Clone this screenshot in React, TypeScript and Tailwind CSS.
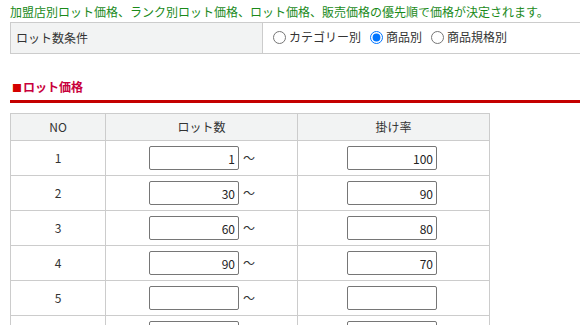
import React from "react";

const rows = [
  { no: "1", lot: "1", rate: "100" },
  { no: "2", lot: "30", rate: "90" },
  { no: "3", lot: "60", rate: "80" },
  { no: "4", lot: "90", rate: "70" },
  { no: "5", lot: "", rate: "" },
  { no: "", lot: "", rate: "" },
];

const font = { fontFamily: '"Noto Sans CJK JP", "Liberation Sans", sans-serif' };

const NumInput = ({ value, extra = "" }: { value: string; extra?: string }) => (
  <input
    type="text"
    defaultValue={value}
    className={`w-[90px] h-[24px] border border-[#767676] rounded-[2px] bg-white text-right pr-[3px] text-[12px] text-[#222] align-middle outline-none ${extra}`}
  />
);

export default function App() {
  return (
    <div
      className="w-[580px] h-[325px] overflow-hidden bg-white text-[12px] text-[#333] pl-[10px]"
      style={font}
    >
      <p className="pt-[3px] leading-[18px] text-[#1a8a1a] whitespace-nowrap">
        加盟店別ロット価格、ランク別ロット価格、ロット価格、販売価格の優先順で価格が決定されます。
      </p>

      <table className="mt-[1px] w-[600px] border-collapse table-fixed">
        <tbody>
          <tr className="h-[31px]">
            <th className="w-[252px] border border-[#cccccc] bg-[#f2f3f3] text-left font-normal px-[5px]">
              ロット数条件
            </th>
            <td className="border border-[#cccccc] px-[5px] whitespace-nowrap">
              <label className="inline-flex items-center">
                <input type="radio" name="cond" className="ml-[5px] mr-[3px] w-[13px] h-[13px]" />
                カテゴリー別
              </label>
              <label className="inline-flex items-center ml-[4px]">
                <input type="radio" name="cond" defaultChecked className="ml-[5px] mr-[3px] w-[13px] h-[13px]" />
                商品別
              </label>
              <label className="inline-flex items-center ml-[4px]">
                <input type="radio" name="cond" className="ml-[5px] mr-[3px] w-[13px] h-[13px]" />
                商品規格別
              </label>
            </td>
          </tr>
        </tbody>
      </table>

      <h2 className="mt-[23px] leading-[20px] pb-[2px] border-b-[3px] border-[#c40000] font-bold text-[12px] text-[#c8003c] pl-[2px]">
        <span className="text-[#d40000] text-[10px] mr-[1px]">■</span>ロット価格
      </h2>

      <table className="mt-[10px] w-[480px] border-collapse table-fixed">
        <thead>
          <tr className="h-[27px] bg-[#f2f3f3]">
            <th className="w-[95px] border border-[#cccccc] font-normal">NO</th>
            <th className="w-[192px] border border-[#cccccc] font-normal">ロット数</th>
            <th className="w-[192px] border border-[#cccccc] font-normal">掛け率</th>
          </tr>
        </thead>
        <tbody>
          {rows.map((r, i) => (
            <tr key={i} className="h-[35px]">
              <td className="border border-[#cccccc] text-center">{r.no}</td>
              <td className="border border-[#cccccc] text-center whitespace-nowrap">
                <NumInput value={r.lot} extra="ml-[1px]" />
                <span className="ml-[4px] align-middle">～</span>
              </td>
              <td className="border border-[#cccccc] text-center">
                <NumInput value={r.rate} extra="mr-[3px]" />
              </td>
            </tr>
          ))}
        </tbody>
      </table>
    </div>
  );
}
